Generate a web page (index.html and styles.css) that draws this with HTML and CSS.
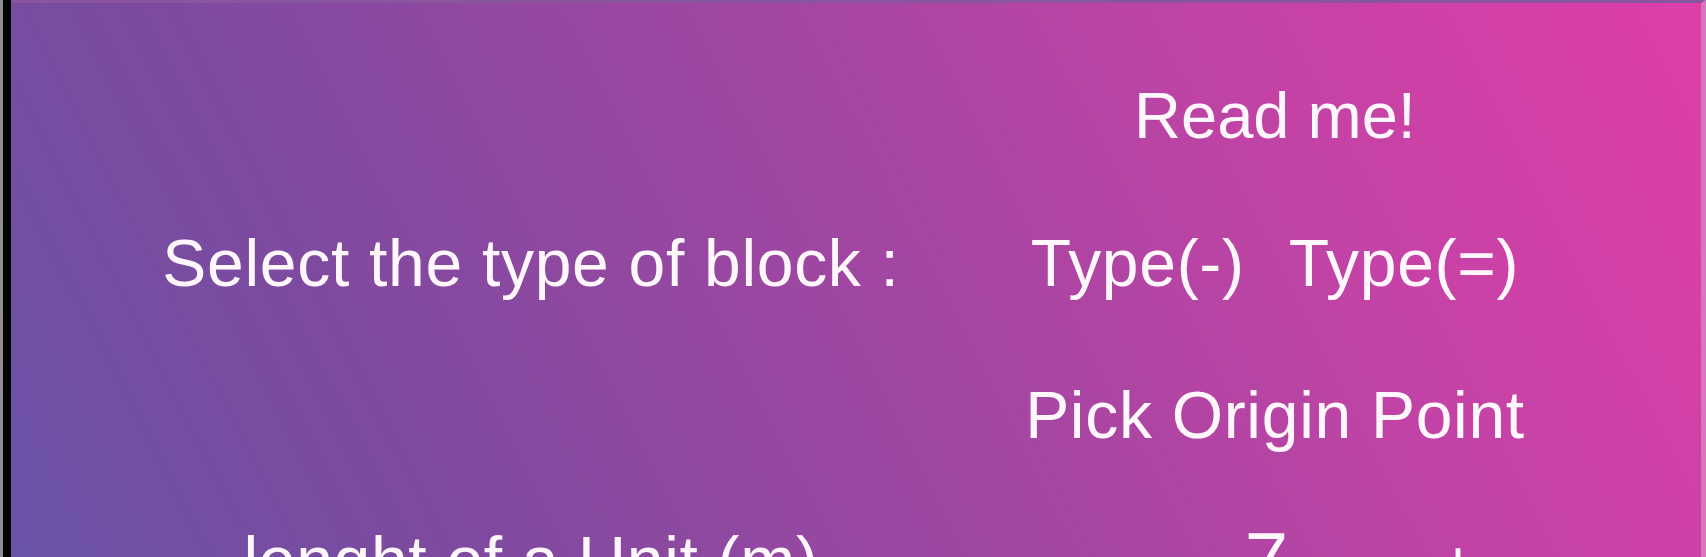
FILE: index.html
```html
<!DOCTYPE html>
<html lang="en">
<head>
<meta charset="utf-8">
<title>Block settings</title>
<link rel="stylesheet" href="styles.css">
</head>
<body>
<div class="frame">
  <div class="edge"></div>
  <main class="panel">
    <div class="grid">
      <div class="cell"></div>
      <div class="cell right"><span class="btn readme">Read me!</span></div>

      <div class="cell left">Select the type of block :</div>
      <div class="cell right types"><span class="btn">Type(-)</span><span class="btn">Type(=)</span></div>

      <div class="cell"></div>
      <div class="cell right"><span class="btn">Pick Origin Point</span></div>

      <div class="cell left">lenght of a Unit (m)</div>
      <div class="cell right stepper"><span class="step">-</span><span class="value">7</span><span class="step">+</span></div>
    </div>
  </main>
</div>
</body>
</html>
```

FILE: styles.css
```css
html, body {
  margin: 0;
  padding: 0;
  width: 100%;
  height: 100%;
  overflow: hidden;
  background: #000;
}

.frame {
  display: flex;
  width: 1706px;
  height: 557px;
}

.edge {
  width: 8px;
  border-left: 3px solid #8e8e8e;
  background: #000;
  flex: none;
}

.panel {
  flex: 1;
  background: linear-gradient(63deg, #6a53a8 0%, #7d4a9f 22%, #a646a2 55%, #c842a6 80%, #df3ea7 100%);
  border-top: 3px solid #8a559f;
  border-right: 5px solid #d876bd;
  box-sizing: border-box;
  padding: 75px 0 0 148px;
  overflow: hidden;
  font-family: "Liberation Sans", Arial, sans-serif;
  font-size: 66px;
  line-height: 76px;
  letter-spacing: 0.7px;
  color: #fff7fc;
}

.grid {
  display: grid;
  grid-template-columns: 744px 744px;
  grid-template-rows: 147px 152px 145px 120px;
}

.cell {
  display: flex;
  justify-content: center;
  align-items: flex-start;
  white-space: nowrap;
}

.readme {
  letter-spacing: 0;
  font-size: 65px;
}

.types {
  gap: 44px;
}

.stepper {
  gap: 150px;
  align-items: baseline;
}

.value {
  font-size: 78px;
}
```
